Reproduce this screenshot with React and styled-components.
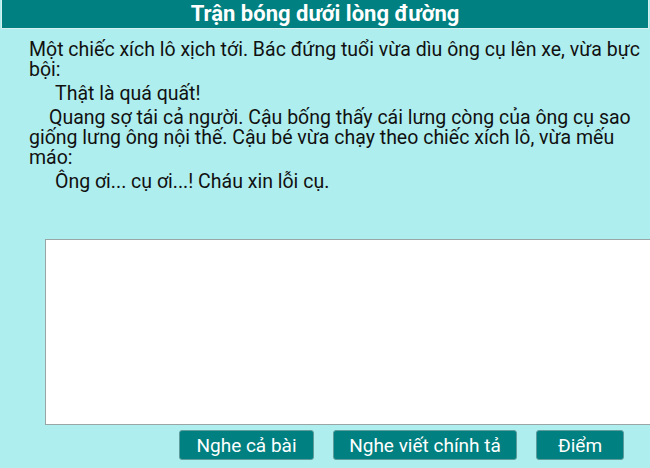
import React from 'react';
import styled, { createGlobalStyle } from 'styled-components';

const GlobalStyle = createGlobalStyle`
  html, body {
    margin: 0;
    padding: 0;
    background: #afeeee;
    overflow: hidden;
  }
  body {
    font-family: Roboto, "Noto Sans", sans-serif;
  }
`;

const lines = [
  { text: 'Một chiếc xích lô xịch tới. Bác đứng tuổi vừa dìu ông cụ lên xe, vừa bực bội:', indent: 0, gap: 0 },
  { text: 'Thật là quá quất!', indent: 26, gap: 4 },
  { text: 'Quang sợ tái cả người. Cậu bống thấy cái lưng còng của ông cụ sao giống lưng ông nội thế. Cậu bé vừa chạy theo chiếc xích lô, vừa mếu máo:', indent: 20, gap: 4 },
  { text: 'Ông ơi... cụ ơi...! Cháu xin lỗi cụ.', indent: 26, gap: 4 },
];

const App = () => {
  return (
    <>
      <GlobalStyle />
      <Page>
        <TitleBar>Trận bóng dưới lòng đường</TitleBar>
        <Passage>
          {lines.map((l, i) => (
            <Line key={i} indent={l.indent} gap={l.gap}>
              {l.text}
            </Line>
          ))}
        </Passage>
        <Answer />
        <Actions>
          <ActionButton width={135}>Nghe cả bài</ActionButton>
          <ActionButton width={184}>Nghe viết chính tả</ActionButton>
          <ActionButton width={88}>Điểm</ActionButton>
        </Actions>
      </Page>
    </>
  );
};

export default App;

const Page = styled.div`
  width: 650px;
  height: 468px;
  overflow: hidden;
`;

const TitleBar = styled.div`
  margin: 0 1px;
  height: 28px;
  border: 1px solid #d6efef;
  border-top: none;
  background: #008080;
  color: #fff;
  font-size: 22px;
  font-weight: 700;
  line-height: 28px;
  text-align: center;
`;

const Passage = styled.div`
  padding: 11px 10px 0 29px;
  font-size: 19.5px;
  line-height: 20px;
  color: #111;
`;

const Line = styled.p`
  margin: ${({ gap }) => gap}px 0 0;
  text-indent: ${({ indent }) => indent}px;
`;

const Answer = styled.textarea`
  display: block;
  box-sizing: border-box;
  margin: 47px 0 0 45px;
  width: 620px;
  height: 186px;
  border: 1px solid #9aa5a5;
  background: #fff;
  resize: none;
  outline: none;
`;

const Actions = styled.div`
  display: flex;
  gap: 19px;
  margin: 5px 0 0 179px;
`;

const ActionButton = styled.button`
  box-sizing: border-box;
  width: ${({ width }) => width}px;
  height: 30px;
  padding: 0;
  border: 1px solid #5f9d9d;
  border-radius: 3px;
  background: #008080;
  color: #fff;
  font-family: Roboto, sans-serif;
  font-size: 19px;
  cursor: pointer;
`;
